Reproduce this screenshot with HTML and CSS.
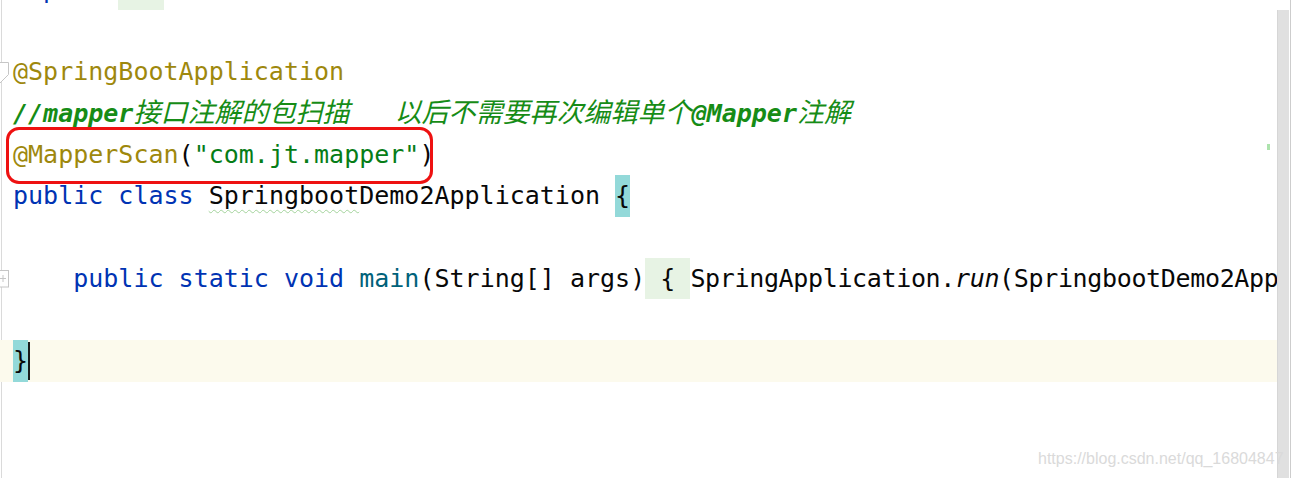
FILE: index.html
```html
<!DOCTYPE html>
<html lang="zh">
<head>
<meta charset="utf-8">
<title>SpringbootDemo2Application.java</title>
<link rel="stylesheet" href="styles.css">
</head>
<body>
<div class="editor">
  <div class="code">
    <div class="line"><span class="kw">import</span> <span class="folded">...</span></div>
    <div class="line"></div>
    <div class="line"><svg class="fold fold-down" width="10" height="22" viewBox="0 0 10 22"><path d="M-1 0.5 H8.5 V12.5 L0 21" fill="#fff" stroke="#c6c6c6" stroke-width="1"/></svg><span class="ann">@SpringBootApplication</span></div>
    <div class="line"><span class="cmt">//mapper<span class="cjk">接口注解的包扫描</span>   <span class="cjk">以后不需要再次编辑单个</span>@Mapper<span class="cjk">注解</span></span></div>
    <div class="line"><span class="ann">@MapperScan</span>(<span class="str">"com.jt.mapper"</span>)</div>
    <div class="line"><span class="kw">public class</span> <span class="typo">Springboot</span>Demo2Application <span class="match">{</span></div>
    <div class="line"></div>
    <div class="line"><svg class="fold fold-plus" width="10" height="18" viewBox="0 0 10 18"><rect x="-8" y="0.5" width="16.5" height="16.5" fill="#fff" stroke="#c6c6c6" stroke-width="1"/><path d="M0 8.5 H6 M3 5 V12" stroke="#c6c6c6" stroke-width="1"/></svg>    <span class="kw">public static void</span> <span class="fn">main</span>(String[] args)<span class="folded"> { </span><span class="tail">SpringApplication.<span class="it">run</span>(SpringbootDemo2Application.class, args); }</span></div>
    <div class="line"></div>
    <div class="line current"><span class="match">}</span><span class="caret"></span></div>
    <div class="line"></div>
  </div>
  <div class="vscroll">
    <div class="track"><div class="thumb"></div></div>
    <div class="edge"></div>
  </div>
  <div class="highlight-box"></div>
  <div class="change-mark"></div>
  <div class="watermark">https://blog.csdn.net/qq_16804847</div>
</div>
</body>
</html>
```

FILE: styles.css
```css
html, body {
  margin: 0;
  padding: 0;
  background: #ffffff;
}

body {
  width: 1291px;
  height: 478px;
  overflow: hidden;
}

.editor {
  position: relative;
  display: flex;
  width: 1291px;
  height: 478px;
  background: #ffffff;
}

.code {
  flex: 0 0 1277px;
  height: 520px;
  margin-top: -31.25px;
  overflow: hidden;
  background: linear-gradient(#dadada, #dadada) no-repeat 1px 0 / 1px 100%;
  font-family: "DejaVu Sans Mono", "Liberation Mono", monospace;
  font-size: 25px;
  color: #080808;
}

.line {
  position: relative;
  height: 41.3px;
  line-height: 41.3px;
  padding-left: 13px;
  white-space: pre;
  overflow: hidden;
}

.line.current {
  background: #fcfaed;
}

.kw { color: #0033b3; }
.ann { color: #9e880d; }
.str { color: #067d17; }
.fn { color: #00627a; }
.it { font-style: italic; }

.tail {
  letter-spacing: -0.35px;
}

.cmt {
  color: #168c16;
  font-style: italic;
  font-weight: bold;
}

.cjk {
  font-family: "Noto Sans CJK SC", sans-serif;
  font-size: 27px;
  font-weight: normal;
  line-height: 1;
}

.folded {
  background: #e7f3e4;
  display: inline-block;
  height: 41.3px;
  vertical-align: top;
}

.match {
  background: #93d9d9;
  display: inline-block;
  height: 41.3px;
  vertical-align: top;
}

.typo {
  text-decoration: underline wavy #a3d39c;
  text-decoration-thickness: 1px;
  text-underline-offset: 5px;
}

.caret {
  display: inline-block;
  width: 2px;
  height: 38px;
  margin-top: 2px;
  vertical-align: top;
  background: #1a1a1a;
}

.fold {
  position: absolute;
  left: 0;
}

.fold-down { top: 11px; }
.fold-plus { top: 12px; }

.vscroll {
  flex: 0 0 14px;
  display: flex;
}

.track {
  width: 13px;
  padding-top: 10px;
  box-sizing: border-box;
}

.thumb {
  width: 11px;
  height: 100%;
  background: #e0e0e0;
  border-left: 1px solid #d6d6d6;
}

.edge {
  width: 1px;
  background: #cdcdcd;
}

.highlight-box {
  position: absolute;
  left: 6px;
  top: 127px;
  width: 427px;
  height: 57px;
  box-sizing: border-box;
  border: 3px solid #ee1111;
  border-radius: 13px;
}

.change-mark {
  position: absolute;
  left: 1267px;
  top: 144px;
  width: 3px;
  height: 6px;
  background: #ade3ad;
}

.watermark {
  position: absolute;
  left: 1038px;
  top: 449.5px;
  font-family: "Liberation Sans", Arial, sans-serif;
  font-size: 16px;
  color: #dadada;
  white-space: nowrap;
}
```
